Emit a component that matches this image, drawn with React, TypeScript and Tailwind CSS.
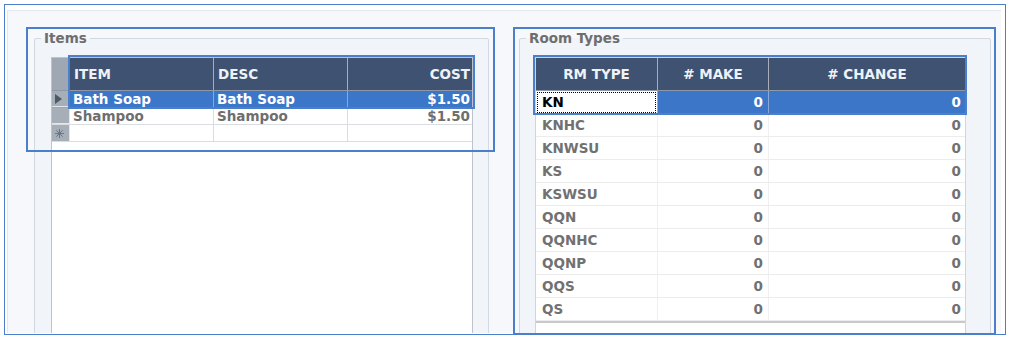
import React from "react";

type Item = { item: string; desc: string; cost: string };

const items: Item[] = [
  { item: "Bath Soap", desc: "Bath Soap", cost: "$1.50" },
  { item: "Shampoo", desc: "Shampoo", cost: "$1.50" },
];

const roomTypes = ["KN", "KNHC", "KNWSU", "KS", "KSWSU", "QQN", "QQNHC", "QQNP", "QQS", "QS"];

function RowArrow() {
  return (
    <svg width="7" height="10" viewBox="0 0 7 10">
      <path d="M0 0 L7 5 L0 10 Z" fill="#4f5966" />
    </svg>
  );
}

function NewRowStar() {
  return (
    <svg width="9" height="9" viewBox="0 0 9 9" stroke="#6b7683" strokeWidth="1">
      <line x1="4.5" y1="0" x2="4.5" y2="9" />
      <line x1="0" y1="4.5" x2="9" y2="4.5" />
      <line x1="1.3" y1="1.3" x2="7.7" y2="7.7" />
      <line x1="7.7" y1="1.3" x2="1.3" y2="7.7" />
    </svg>
  );
}

function ItemsGrid() {
  return (
    <div className="mt-[11px] ml-[16px] w-[422px] h-[300px] bg-white border border-[#bcc3cc] flex flex-col">
      {/* column headers */}
      <div className="flex h-[33px] shrink-0 bg-[#3f5272] border-b border-[#8e98a6] text-[#eef2f7]">
        <div className="w-[18px] bg-[#9ea7b2] border-r border-[#c9ced5]" />
        <div className="w-[144px] pl-[4px] flex items-center border-r border-[#a7aeb8]">ITEM</div>
        <div className="w-[134px] pl-[4px] flex items-center border-r border-[#a7aeb8]">DESC</div>
        <div className="flex-1 pr-[2px] flex items-center justify-end">COST</div>
      </div>
      {items.map((r, i) => {
        const selected = i === 0;
        return (
          <div
            key={i}
            className={
              selected
                ? "flex h-[17px] shrink-0 leading-[16px] bg-[#3b76c9] text-white border-b border-[#8aa9d6]"
                : "flex h-[17px] shrink-0 leading-[16px] bg-white text-[#6e6e6e] border-b border-[#d9dde2]"
            }
          >
            <div className="w-[18px] bg-[#a6aeb8] border-r border-b border-[#e2e5e9] flex items-center pl-[3px]">
              {selected ? <RowArrow /> : null}
            </div>
            <div className={selected ? "w-[144px] pl-[3px] border-r border-[#8aa9d6]" : "w-[144px] pl-[3px] border-r border-[#d9dde2]"}>
              {r.item}
            </div>
            <div className={selected ? "w-[134px] pl-[3px] border-r border-[#8aa9d6]" : "w-[134px] pl-[3px] border-r border-[#d9dde2]"}>
              {r.desc}
            </div>
            <div className="flex-1 pr-[2px] text-right">{r.cost}</div>
          </div>
        );
      })}
      {/* new-record row */}
      <div className="flex h-[17px] shrink-0 bg-white border-b border-[#d9dde2]">
        <div className="w-[18px] bg-[#a6aeb8] border-r border-[#e2e5e9] flex items-center pl-[3px]">
          <NewRowStar />
        </div>
        <div className="w-[144px] border-r border-[#d9dde2]" />
        <div className="w-[134px] border-r border-[#d9dde2]" />
        <div className="flex-1" />
      </div>
    </div>
  );
}

function RoomTypesGrid() {
  return (
    <div className="mt-[11px] ml-[15px] w-[431px] h-[300px] bg-white border-l border-t border-r border-[#cfd5dc] flex flex-col">
      <div className="flex h-[33px] shrink-0 bg-[#3f5272] border-b border-[#8e98a6] text-[#eef2f7]">
        <div className="w-[122px] flex items-center justify-center border-r border-[#a7aeb8]">RM TYPE</div>
        <div className="w-[111px] flex items-center justify-center border-r border-[#a7aeb8]">{"# MAKE"}</div>
        <div className="flex-1 flex items-center justify-center">{"# CHANGE"}</div>
      </div>
      <div className="flex flex-col border-b-2 border-[#c7c9cc]">
        {roomTypes.map((code, i) => {
          const selected = i === 0;
          if (selected) {
            return (
              <div key={code} className="flex h-[23px] shrink-0 leading-[22px]">
                <div className="w-[122px] bg-white border-r border-[#8aa9d6] p-[1px]">
                  <div className="h-full border border-dotted border-black pl-[4px] leading-[19px] text-black">{code}</div>
                </div>
                <div className="w-[111px] bg-[#3b76c9] text-white text-right pr-[5px] border-r border-[#8aa9d6]">0</div>
                <div className="flex-1 bg-[#3b76c9] text-white text-right pr-[4px]">0</div>
              </div>
            );
          }
          return (
            <div key={code} className="flex h-[23px] shrink-0 leading-[22px] text-[#717171] border-b border-[#ececec]">
              <div className="w-[122px] pl-[6px] border-r border-[#f0f0f0]">{code}</div>
              <div className="w-[111px] text-right pr-[5px] border-r border-[#f0f0f0]">0</div>
              <div className="flex-1 text-right pr-[4px]">0</div>
            </div>
          );
        })}
      </div>
      <div className="flex-1 bg-white" />
    </div>
  );
}

export default function App() {
  return (
    <div className="relative w-[1010px] h-[340px] bg-white pl-[4px] pt-[4px] overflow-hidden font-['DejaVu_Sans',Verdana,sans-serif] font-bold text-[13.5px]">
      {/* window frame */}
      <div className="w-[1002px] h-[331px] border border-[#4a7fcb] pl-[2px] pt-[5px]">
        <div className="w-[994px] h-[323px] bg-[#f6f8fb] border-l border-t border-[#e4e8ee] pl-[26px] pt-[19px] flex overflow-hidden">
          <fieldset className="w-[455px] h-[320px] shrink-0 border border-[#d3d9e1] rounded-[2px] bg-[#f1f4f8] p-0 m-0 min-w-0">
            <legend className="ml-[6px] px-[3px] leading-[16px] text-[#6e6e6e]">Items</legend>
            <ItemsGrid />
          </fieldset>
          <fieldset className="ml-[30px] w-[472px] h-[320px] shrink-0 border border-[#d3d9e1] rounded-[2px] bg-[#f1f4f8] p-0 m-0 min-w-0">
            <legend className="ml-[6px] px-[3px] leading-[16px] text-[#6e6e6e]">Room Types</legend>
            <RoomTypesGrid />
          </fieldset>
        </div>
      </div>

      {/* highlight outlines drawn over the panels */}
      <div className="pointer-events-none absolute left-[26px] top-[27px] w-[469px] h-[125px] border-2 border-[#4a7fcb]" />
      <div className="pointer-events-none absolute left-[68px] top-[55px] w-[407px] h-[54px] border-2 border-[#4a7fcb]" />
      <div className="pointer-events-none absolute left-[513px] top-[27px] w-[483px] h-[308px] border-2 border-[#4a7fcb]" />
      <div className="pointer-events-none absolute left-[533px] top-[55px] w-[434px] h-[60px] border-2 border-[#4a7fcb]" />
    </div>
  );
}
